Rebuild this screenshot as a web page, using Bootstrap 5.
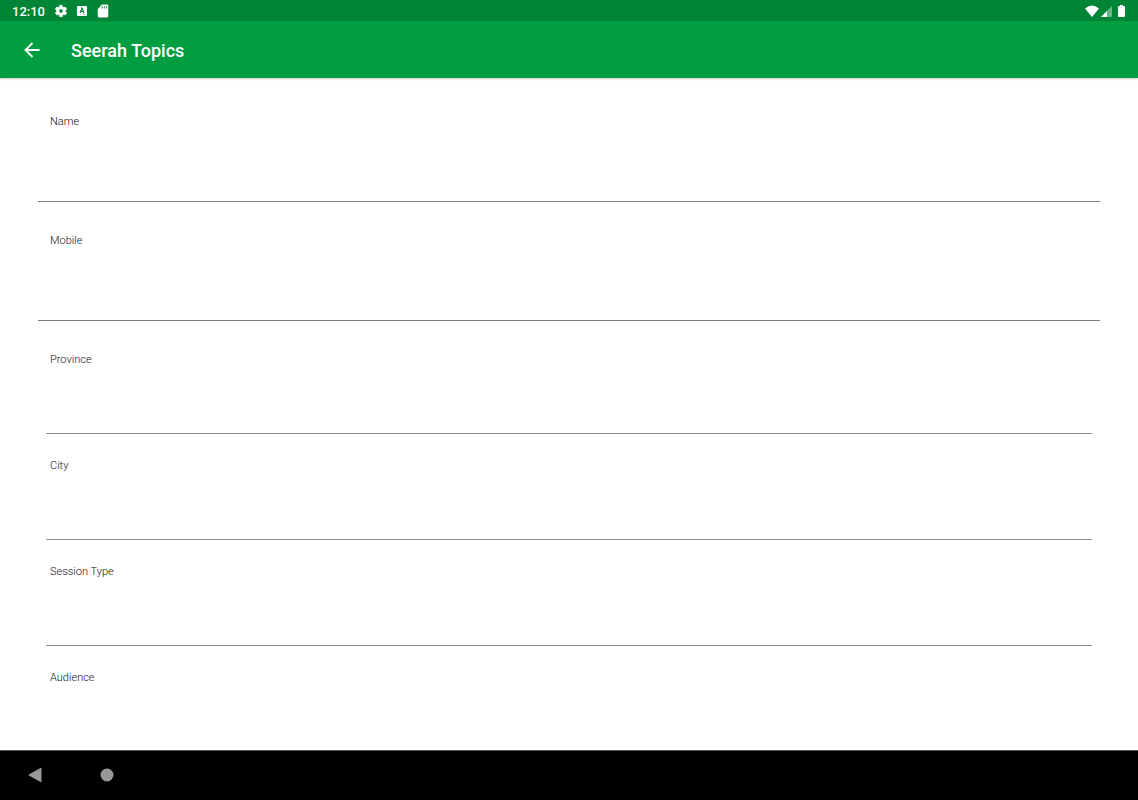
<!DOCTYPE html>
<html lang="en">
<head>
<meta charset="utf-8">
<meta name="viewport" content="width=device-width, initial-scale=1">
<title>Seerah Topics</title>
<link href="https://cdn.jsdelivr.net/npm/bootstrap@5.3.0/dist/css/bootstrap.min.css" rel="stylesheet">
<style>
  body { font-family: Roboto, "Liberation Sans", sans-serif; background: #fff; }
  .status-bar { background: #008435; height: 21px; padding: 0 12px; font-size: 13px; line-height: 21px; font-weight: 500; }
  .clock { padding-top: 1px; width: 32px; white-space: nowrap; }
  .status-icons { gap: 7px; margin-left: 10px; }
  .radio-icons { margin-right: 1px; gap: 2px; }
  .app-bar { background: #009e40; height: 57px; padding: 0 20px; box-shadow: 0 1px 2px rgba(0, 0, 0, .2); z-index: 1; }
  .app-bar h1 { font-size: 18px; line-height: 24px; margin-left: 27px; padding-top: 2px; }
  .topic-form { min-height: 0; padding: 5px 38px 0; scrollbar-width: none; }
  .topic-form::-webkit-scrollbar { display: none; }
  .topic-form label { display: block; font-size: 11px; line-height: 18px; font-weight: 300; color: #111; padding-left: 12px; }
  .text-field { padding-top: 30px; }
  .pick-list { padding: 7px 8px 0; }
  .pick-field { padding-top: 23px; }
  .topic-form .pick-field label { padding-left: 4px; }
  .line-input { border-width: 0 0 1px; border-color: #7c7c7c; border-radius: 0; background: transparent none; height: 71px; }
  .pick-field .line-input { height: 65px; border-color: #8c8c8c; }
  .nav-keys { background: #000; height: 50px; padding: 0 26px 2px; gap: 54px; border-top: 1px solid #555; }
  svg { display: block; }
</style>
</head>
<body>
<div class="d-flex flex-column vh-100 overflow-hidden">
  <div class="status-bar d-flex align-items-center text-white flex-shrink-0">
    <span class="clock">12:10</span>
    <div class="status-icons d-flex align-items-center">
      <svg width="14" height="14" viewBox="0 0 24 24" fill="#fff" stroke="#fff" stroke-width=".8" aria-hidden="true"><path d="M19.43 12.98c.04-.32.07-.64.07-.98s-.03-.66-.07-.98l2.11-1.65c.19-.15.24-.42.12-.64l-2-3.46c-.12-.22-.39-.3-.61-.22l-2.49 1c-.52-.4-1.08-.73-1.69-.98l-.38-2.65C14.46 2.18 14.25 2 14 2h-4c-.25 0-.46.18-.49.42l-.38 2.65c-.61.25-1.17.59-1.69.98l-2.49-1c-.23-.09-.49 0-.61.22l-2 3.46c-.13.22-.07.49.12.64l2.11 1.65c-.04.32-.07.65-.07.98s.03.66.07.98l-2.11 1.65c-.19.15-.24.42-.12.64l2 3.46c.12.22.39.3.61.22l2.49-1c.52.4 1.08.73 1.69.98l.38 2.65c.03.24.24.42.49.42h4c.25 0 .46-.18.49-.42l.38-2.65c.61-.25 1.17-.59 1.69-.98l2.49 1c.23.09.49 0 .61-.22l2-3.46c.12-.22.07-.49-.12-.64zM12 15.5A3.5 3.5 0 1 1 12 8.500a3.500 3.500 0 0 1 0 7z"/></svg>
      <svg width="14" height="14" viewBox="0 0 14 14" aria-hidden="true"><rect x="2" y="2" width="10" height="10" rx="1" fill="#fff"/><path d="M5 9 7 4l2 5M5.600 7.500h2.800" fill="none" stroke="#008435" stroke-width="1.200"/><path d="M8.500 10.500h2" stroke="#008435" stroke-opacity=".5"/></svg>
      <svg width="14" height="14" viewBox="0 0 24 24" fill="#fff" aria-hidden="true"><path fill-rule="evenodd" d="M19 1H10L3 8.500V21q0 2 2 2h14q2 0 2-2V3q0-2-2-2zM10 4h1.500v3.500H10zM13.500 4H15v3.500h-1.500zM17 4h1.500v3.500H17z"/></svg>
    </div>
    <div class="radio-icons d-flex align-items-center ms-auto">
      <svg width="14" height="14" viewBox="0 0 14 14" fill="#fff" aria-hidden="true"><path d="M0 4.500Q7-1.500 14 4.500L7 13z"/></svg>
      <svg width="11" height="14" viewBox="0 0 11 14" aria-hidden="true"><path d="M0 13 11 2v11z" fill="#fff" opacity=".4"/><path d="M0 13 6 7v6z" fill="#fff"/></svg>
      <svg class="ms-1" width="7" height="14" viewBox="0 0 7 14" fill="#fff" aria-hidden="true"><path d="M2 1h3v1h1q1 0 1 1v9q0 1-1 1H1q-1 0-1-1V3q0-1 1-1h1z"/></svg>
    </div>
  </div>
  <header class="app-bar d-flex align-items-center text-white flex-shrink-0 position-relative">
    <button type="button" class="btn p-0 border-0 text-white" aria-label="Back">
      <svg width="24" height="24" viewBox="0 0 24 24" fill="none" stroke="currentColor" stroke-width="1.800" aria-hidden="true"><path d="M19.500 12H6M12.500 5l-7 7 7 7"/></svg>
    </button>
    <h1 class="mb-0">Seerah Topics</h1>
  </header>
  <main class="flex-grow-1 overflow-auto topic-form">
    <form>
      <div class="text-field"><label for="name">Name</label><input id="name" type="text" class="form-control line-input"></div>
      <div class="text-field"><label for="mobile">Mobile</label><input id="mobile" type="tel" class="form-control line-input"></div>
      <div class="pick-list">
        <div class="pick-field"><label for="province">Province</label><select id="province" class="form-select line-input"><option></option></select></div>
        <div class="pick-field"><label for="city">City</label><select id="city" class="form-select line-input"><option></option></select></div>
        <div class="pick-field"><label for="session">Session Type</label><select id="session" class="form-select line-input"><option></option></select></div>
        <div class="pick-field"><label for="audience">Audience</label><select id="audience" class="form-select line-input"><option></option></select></div>
      </div>
    </form>
  </main>
  <nav class="nav-keys d-flex align-items-center flex-shrink-0" aria-label="System">
    <button type="button" class="btn p-0 border-0" aria-label="Back"><svg width="18" height="18" viewBox="0 0 18 18" fill="#999" aria-hidden="true"><path d="M2 9 14.500 2q1-.5 1 .5v13q0 1-1 .5z"/></svg></button>
    <button type="button" class="btn p-0 border-0" aria-label="Home"><svg width="18" height="18" viewBox="0 0 18 18" aria-hidden="true"><circle cx="9" cy="9" r="6.500" fill="#999"/></svg></button>
  </nav>
</div>
<script src="https://cdn.jsdelivr.net/npm/bootstrap@5.3.0/dist/js/bootstrap.bundle.min.js"></script>
</body>
</html>
